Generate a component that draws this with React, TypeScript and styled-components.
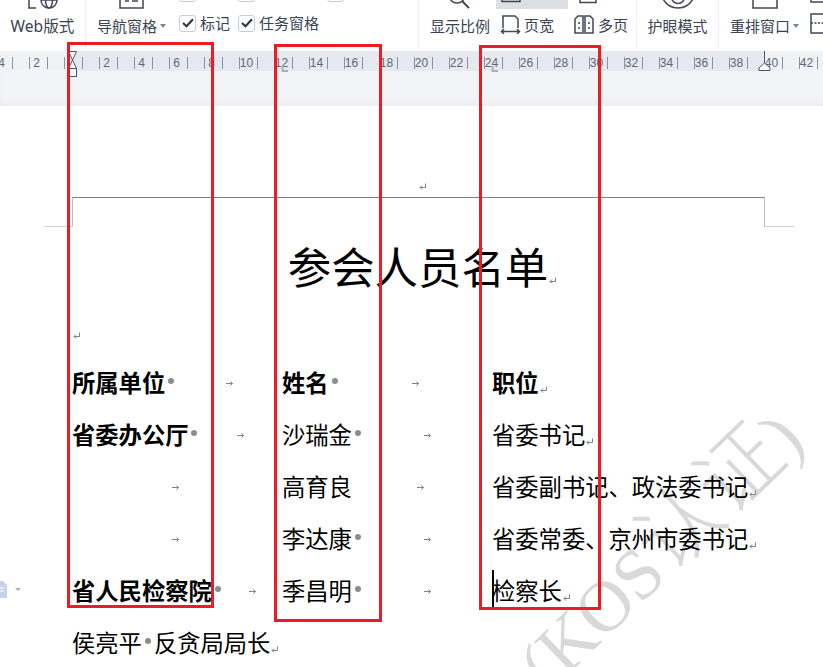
import React from "react";
import styled, { createGlobalStyle } from "styled-components";

const Global = createGlobalStyle`
  html, body { margin: 0; padding: 0; background: #fff; }
  * { box-sizing: border-box; }
`;

const CJK = `"Noto Sans CJK SC", "Noto Sans", sans-serif`;

const Screen = styled.div`
  position: relative;
  width: 823px;
  height: 667px;
  overflow: hidden;
  background: #fff;
  font-family: ${CJK};
`;

/* ---------- ribbon ---------- */
const Ribbon = styled.div`
  display: flex;
  height: 51px;
  overflow: hidden;
  background: #fff;
  color: #3b4252;
  font-size: 15px;
  line-height: 20px;
`;
const Group = styled.div<{ $w: number; $pad?: number }>`
  display: flex;
  flex: none;
  width: ${(p) => p.$w}px;
  height: 49px;
  padding-left: ${(p) => p.$pad ?? 0}px;
  border-right: 1px solid #eef0f2;
`;
const Column = styled.div<{ $w?: number; $pad?: number }>`
  display: flex;
  flex: ${(p) => (p.$w ? "none" : "1")};
  width: ${(p) => (p.$w ? `${p.$w}px` : "auto")};
  height: 51px;
  flex-direction: column;
  align-items: center;
  justify-content: flex-end;
  padding-left: ${(p) => p.$pad ?? 0}px;
  padding-bottom: 15px;
  white-space: nowrap;
`;
const LeftColumn = styled(Column)`
  align-items: flex-start;
`;
const RibbonIcon = styled.svg`
  flex: none;
  margin-bottom: 7px;
  fill: none;
  stroke: #404756;
  stroke-width: 1.5;
`;
const TailIcon = styled(RibbonIcon)`
  margin-bottom: 17px;
`;
const WebLabel = styled.span`
  font-family: "Noto Sans", "Noto Sans CJK SC", sans-serif;
  font-size: 15.6px;
`;
const LabelRow = styled.span`
  display: flex;
  align-items: center;
  gap: 3px;
`;
const Caret = styled.i`
  display: block;
  width: 0;
  height: 0;
  border-left: 3.5px solid transparent;
  border-right: 3.5px solid transparent;
  border-top: 4px solid #7d8492;
`;
const CheckColumn = styled.div<{ $w: number }>`
  display: flex;
  flex: none;
  width: ${(p) => p.$w}px;
  height: 51px;
  flex-direction: column;
  justify-content: flex-end;
  gap: 12px;
  padding-bottom: 19px;
`;
const CheckRow = styled.label`
  display: flex;
  flex: none;
  align-items: center;
  gap: 4px;
  height: 18px;
  white-space: nowrap;
`;
const Box = styled.span`
  display: flex;
  flex: none;
  width: 17px;
  height: 17px;
  align-items: center;
  justify-content: center;
  border: 1.5px solid #c9ccd2;
  border-radius: 3px;
  background: #fff;
`;
const ViewGrid = styled.div`
  display: grid;
  flex: none;
  grid-template-columns: 72px 62px;
  grid-template-rows: 9px 30px;
  column-gap: 6px;
`;
const ViewTop = styled.div<{ $on?: boolean }>`
  display: flex;
  height: 9px;
  padding-left: 5px;
  align-items: flex-start;
  background: ${(p) => (p.$on ? "#dcdfe3" : "transparent")};
`;
const ViewItem = styled.div<{ $pad: number; $gap: number }>`
  display: flex;
  align-items: flex-start;
  gap: ${(p) => p.$gap}px;
  padding: 6px 0 0 ${(p) => p.$pad}px;
  white-space: nowrap;
`;
const TightIcon = styled.svg`
  flex: none;
  fill: none;
  stroke: #404756;
  stroke-width: 1.5;
`;
const TailColumn = styled.div`
  display: flex;
  flex: 1;
  height: 51px;
  flex-direction: column;
  justify-content: flex-end;
`;

/* ---------- ruler ---------- */
const RulerZone = styled.div`
  position: relative;
  height: 55px;
  background: linear-gradient(#f3f4f7 85%, #eceef1);
  box-shadow: inset 0 2px 2px -1px rgba(60, 70, 90, 0.16);
`;
const RulerBand = styled.div`
  display: grid;
  grid-template-columns: 72px 692px 1fr;
  height: 20px;
`;
const BandEnd = styled.div`
  background: #f0f2f5;
`;
const BandMid = styled.div`
  background: #e6e9ef;
`;
const RulerDrawing = styled.svg`
  position: absolute;
  top: 0;
  left: 0;
  overflow: visible;
`;

/* ---------- document ---------- */
const Sheet = styled.div`
  position: relative;
  height: 561px;
  color: #000;
`;
const Watermark = styled.svg`
  position: absolute;
  top: -106px;
  left: 0;
  z-index: 0;
  pointer-events: none;
`;
const Flow = styled.div`
  position: relative;
  z-index: 1;
`;
const HeaderMarkRow = styled.div`
  display: flex;
  height: 91px;
  padding: 77px 0 0 418px;
`;
const CropFrame = styled.div`
  position: relative;
  width: 693px;
  height: 30px;
  margin-left: 72px;
  border: solid #bdbdbd;
  border-width: 0 1px;
  border-top: 1px solid #808080;
  &::before,
  &::after {
    content: "";
    position: absolute;
    bottom: 0;
    width: 29px;
    height: 1px;
    background: #cfcfcf;
  }
  &::before { left: -29px; }
  &::after { right: -30px; }
`;
const Title = styled.h1`
  display: flex;
  justify-content: center;
  align-items: flex-end;
  height: 60px;
  margin: 8px 0 0 72px;
  width: 692px;
  font-size: 43.4px;
  font-weight: 400;
  line-height: 60px;
`;
const TitleText = styled.span``;
const TitleEnd = styled.span`
  display: flex;
  width: 0;
  height: 38px;
`;
const EmptyPara = styled.div`
  height: 61px;
  padding: 25px 0 0 72px;
`;
const Rows = styled.div`
  display: flex;
  flex-direction: column;
  padding-left: 72px;
`;
const Row = styled.div`
  display: grid;
  grid-template-columns: 210px 210px 1fr;
  height: 52px;
  font-size: 23.3px;
  line-height: 52px;
  white-space: nowrap;
`;
const Cell = styled.div<{ $bold?: boolean }>`
  position: relative;
  display: flex;
  align-items: center;
  font-weight: ${(p) => (p.$bold ? 700 : 400)};
`;
const WideCell = styled(Cell)`
  grid-column: 1 / -1;
`;
const Dot = styled.i`
  display: block;
  flex: none;
  width: 6px;
  height: 6px;
  margin: -2px 5px 0 3px;
  border-radius: 50%;
  background: #8c8c8c;
`;
const InlineDot = styled(Dot)`
  margin: -2px 3px 0 3px;
`;
const TabGap = styled.span`
  display: flex;
  flex: 1;
  justify-content: center;
  padding: 2px 3px 0 0;
`;
const MarkSvg = styled.svg`
  flex: none;
  fill: none;
  stroke: #808080;
  stroke-width: 1;
`;
const ReturnSvg = styled(MarkSvg)<{ $lift?: number }>`
  margin: ${(p) => p.$lift ?? 14}px 0 0 1px;
`;
const Caretline = styled.i`
  position: absolute;
  top: 6px;
  left: 0;
  width: 2px;
  height: 37px;
  background: #000;
`;

/* ---------- overlays ---------- */
const RedBox = styled.div<{ $x: number; $y: number; $w: number; $h: number }>`
  position: absolute;
  left: ${(p) => p.$x}px;
  top: ${(p) => p.$y}px;
  width: ${(p) => p.$w}px;
  height: ${(p) => p.$h}px;
  border: 3px solid #ed1c24;
  z-index: 5;
`;
const SideIcon = styled.svg`
  position: absolute;
  left: 0;
  top: 580px;
  z-index: 2;
`;

const Return = ({ lift }: { lift?: number }) => (
  <ReturnSvg $lift={lift} width="7" height="7" viewBox="0 0 7 7">
    <path d="M6.5 0.5V4.5H1M3 2.5L1 4.5L3 6.5" />
  </ReturnSvg>
);
const Tab = () => (
  <TabGap>
    <MarkSvg width="7" height="7" viewBox="0 0 7 7">
      <path d="M0 3.5H6.5M4.5 1.5L6.5 3.5L4.5 5.5" />
    </MarkSvg>
  </TabGap>
);
const Check = () => (
  <svg width="12" height="10" viewBox="0 0 12 10" fill="none" stroke="#2f3544" strokeWidth="2.2">
    <path d="M1 5L4.5 8.2L11 1.2" />
  </svg>
);

const tickList = Array.from({ length: 48 }, (_, i) => 11.75 + i * 17.5);
const labels = [-4, -2, 2, 4, 6, 8, 10, 12, 14, 16, 18, 20, 22, 24, 26, 28, 30, 32, 34, 36, 38, 40, 42];

const Ruler = () => (
  <RulerDrawing width="823" height="26" viewBox="0 0 823 26">
    {tickList.map((x) => (
      <path key={x} d={`M${Math.round(x) + 0.5} 6V18`} stroke="#8b93a1" strokeWidth="1" />
    ))}
    {labels.map((n) => (
      <text
        key={n}
        x={71.5 + n * 17.5}
        y="16"
        textAnchor="middle"
        fontSize="12"
        fontFamily='"Liberation Sans", sans-serif'
        fill="#5f6776"
      >
        {Math.abs(n)}
      </text>
    ))}
    <path d="M68.5 0.5H76.5L72.5 9L76.5 17.5H68.5L72.5 9Z" fill="#fff" stroke="#4b5468" />
    <rect x="68.5" y="17.5" width="8" height="8" fill="#fff" stroke="#4b5468" />
    <path d="M282.5 15V20H288M492.5 15V20H498" fill="none" stroke="#a9aeb8" strokeWidth="2" />
    <path d="M764.5 0V12" stroke="#4b5468" />
    <path d="M764.5 12L770 17V19.5H759V17Z" fill="#fff" stroke="#4b5468" />
  </RulerDrawing>
);

export default function App() {
  return (
    <Screen>
      <Global />
      <Ribbon>
        <Group $w={86}>
          <Column>
            <RibbonIcon width="32" height="24" viewBox="0 0 32 24">
              <path d="M2 6V23H9" />
              <circle cx="22" cy="15" r="8" />
              <ellipse cx="22" cy="15" rx="3.5" ry="8" />
              <path d="M14 15H30" />
            </RibbonIcon>
            <WebLabel>Web版式</WebLabel>
          </Column>
        </Group>
        <Group $w={333} $pad={11}>
          <LeftColumn $w={82}>
            <RibbonIcon width="70" height="24" viewBox="0 0 70 24">
              <path d="M23 0V23H46V0" />
              <path d="M28 16H32M35 16H41" />
            </RibbonIcon>
            <LabelRow>
              导航窗格
              <Caret />
            </LabelRow>
          </LeftColumn>
          <CheckColumn $w={59}>
            <Box />
            <CheckRow>
              <Box>
                <Check />
              </Box>
              标记
            </CheckRow>
          </CheckColumn>
          <CheckColumn $w={89}>
            <Box />
            <CheckRow>
              <Box>
                <Check />
              </Box>
              任务窗格
            </CheckRow>
          </CheckColumn>
          <CheckColumn $w={59}>
            <Box />
            <CheckRow />
          </CheckColumn>
        </Group>
        <Column $w={77} $pad={5}>
          <RibbonIcon width="32" height="24" viewBox="0 0 32 24">
            <circle cx="13" cy="10" r="8" />
            <path d="M18 16L25 23" strokeWidth="2" />
          </RibbonIcon>
          显示比例
        </Column>
        <Group $w={141}>
          <ViewGrid>
            <ViewTop $on>
              <TightIcon width="20" height="9" viewBox="0 0 20 9">
                <path d="M1 -4V1.5H19V-4" />
              </TightIcon>
            </ViewTop>
            <ViewTop>
              <TightIcon width="18" height="9" viewBox="0 0 18 9">
                <path d="M1 -4V2.5H17V-4" />
              </TightIcon>
            </ViewTop>
            <ViewItem $pad={4} $gap={3}>
              <TightIcon width="21" height="19" viewBox="0 0 21 19">
                <path d="M3 13V1H15L18 4V13" />
                <path d="M1.5 16.5H19.5M4 14L1.5 16.5L4 19M17 14L19.5 16.5L17 19" />
              </TightIcon>
              页宽
            </ViewItem>
            <ViewItem $pad={0} $gap={4}>
              <TightIcon width="20" height="19" viewBox="0 0 20 19">
                <path d="M1 18V4L4 1H9V18ZM11 18V1H16L19 4V18Z" />
                <path d="M5 7V9M5 12V14M15 7V9M15 12V14" />
              </TightIcon>
              多页
            </ViewItem>
          </ViewGrid>
        </Group>
        <Group $w={82}>
          <Column>
            <RibbonIcon width="32" height="24" viewBox="0 0 32 24">
              <path d="M1 14C5 21 11 23 16 23C21 23 27 21 31 14" />
              <circle cx="16" cy="12" r="6.5" />
            </RibbonIcon>
            护眼模式
          </Column>
        </Group>
        <LeftColumn $w={91} $pad={11}>
          <RibbonIcon width="70" height="24" viewBox="0 0 70 24">
            <path d="M23 0V23H47V0M23 14H47" />
          </RibbonIcon>
          <LabelRow>
            重排窗口
            <Caret />
          </LabelRow>
        </LeftColumn>
        <TailColumn>
          <TailIcon width="14" height="40" viewBox="0 0 14 40">
            <path d="M14 8H1V6M14 20H1V39H14" />
            <path d="M1 29H14" strokeDasharray="2 1.5" />
          </TailIcon>
        </TailColumn>
      </Ribbon>

      <RulerZone>
        <RulerBand>
          <BandEnd />
          <BandMid />
          <BandEnd />
        </RulerBand>
        <Ruler />
      </RulerZone>

      <Sheet>
        <Watermark width="823" height="667" viewBox="0 0 823 667">
          <text
            transform="translate(548 694) rotate(-44)"
            fontFamily='"Liberation Serif", "Noto Sans CJK SC", serif'
            fontSize="72"
            fill="#d9d9d9"
          >
            (KOS
            <tspan fontFamily='"Noto Sans CJK SC", sans-serif' fontSize="84" fontWeight="300">
              认证
            </tspan>
            )
          </text>
        </Watermark>
        <Flow>
          <HeaderMarkRow>
            <Return lift={0} />
          </HeaderMarkRow>
          <CropFrame />
          <Title>
            <TitleText>参会人员名单</TitleText>
            <TitleEnd>
              <Return lift={20} />
            </TitleEnd>
          </Title>
          <EmptyPara>
            <Return lift={0} />
          </EmptyPara>
          <Rows>
            <Row>
              <Cell $bold>
                所属单位
                <Dot />
                <Tab />
              </Cell>
              <Cell $bold>
                姓名
                <Dot />
                <Tab />
              </Cell>
              <Cell $bold>
                职位
                <Return />
              </Cell>
            </Row>
            <Row>
              <Cell $bold>
                省委办公厅
                <Dot />
                <Tab />
              </Cell>
              <Cell>
                沙瑞金
                <Dot />
                <Tab />
              </Cell>
              <Cell>
                省委书记
                <Return />
              </Cell>
            </Row>
            <Row>
              <Cell>
                <Tab />
              </Cell>
              <Cell>
                高育良
                <Tab />
              </Cell>
              <Cell>
                省委副书记、政法委书记
                <Return />
              </Cell>
            </Row>
            <Row>
              <Cell>
                <Tab />
              </Cell>
              <Cell>
                李达康
                <Dot />
                <Tab />
              </Cell>
              <Cell>
                省委常委、京州市委书记
                <Return />
              </Cell>
            </Row>
            <Row>
              <Cell $bold>
                省人民检察院
                <Dot />
                <Tab />
              </Cell>
              <Cell>
                季昌明
                <Dot />
                <Tab />
              </Cell>
              <Cell>
                <Caretline />
                检察长
                <Return />
              </Cell>
            </Row>
            <Row>
              <WideCell>
                侯亮平
                <InlineDot />
                反贪局局长
                <Return />
              </WideCell>
            </Row>
          </Rows>
        </Flow>
      </Sheet>

      <SideIcon width="22" height="18" viewBox="0 0 22 18">
        <path d="M0 1H3L7 5V18H0Z" fill="#c5d3ea" />
        <path d="M0 8H4M0 11H4" stroke="#fff" />
        <path d="M15 8H21L18 11Z" fill="#b0b0b0" />
      </SideIcon>

      <RedBox $x={67} $y={42} $w={147} $h={566} />
      <RedBox $x={274} $y={44} $w={108} $h={578} />
      <RedBox $x={479} $y={45} $w={122} $h={565} />
    </Screen>
  );
}
